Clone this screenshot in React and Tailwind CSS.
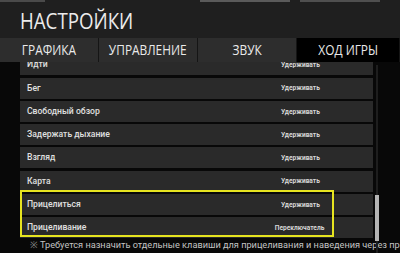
import React from "react";

const rows = [
  ["Идти", "Удерживать"],
  ["Бег", "Удерживать"],
  ["Свободный обзор", "Удерживать"],
  ["Задержать дыхание", "Удерживать"],
  ["Взгляд", "Удерживать"],
  ["Карта", "Удерживать"],
  ["Прицелиться", "Удерживать"],
  ["Прицеливание", "Переключатель"],
];

const tabs = ["ГРАФИКА", "УПРАВЛЕНИЕ", "ЗВУК", "ХОД ИГРЫ"];

export default function App() {
  return (
    <div className="relative w-[400px] h-[253px] overflow-hidden bg-[#080808] flex flex-col font-['Roboto',sans-serif]">
      {/* header */}
      <div className="h-[38px] bg-[#1f1f1f] flex flex-col">
        <div className="h-[2px] flex">
          <div className="w-[45px] bg-[#4a4a4a]" />
          <div className="w-[155px]" />
          <div className="w-[90px] bg-[#5a5a5a]" />
          <div className="w-[10px]" />
          <div className="w-[80px] bg-[#4f4f4f]" />
        </div>
        <div className="flex-1 flex items-center pl-[20px]">
          <span className="inline-block origin-left scale-x-[0.85] text-[22px] leading-none text-[#ececec] font-['Open_Sans',sans-serif]">
            НАСТРОЙКИ
          </span>
        </div>
      </div>
      {/* tabs */}
      <div className="h-[24px] flex bg-[#151515] gap-[1px]">
        {tabs.map((t, i) => (
          <div
            key={t}
            className={
              i === 3
                ? "w-[102px] bg-black flex items-center justify-center"
                : "w-[98px] bg-[#2d2d2d] flex items-center justify-center"
            }
          >
            <span className="inline-block scale-x-[0.85] text-[14px] leading-none text-[#eaeaea] font-['Open_Sans',sans-serif]">
              {t}
            </span>
          </div>
        ))}
      </div>
      {/* content */}
      <div className="flex-1 flex">
        <div className="w-[20px]" />
        <div className="w-[353px] flex flex-col">
          <div className="h-[176.3px] overflow-hidden">
            <div className="flex flex-col gap-[2.3px] mt-[-7.8px]">
              {rows.map(([l, v]) => (
                <div key={l} className="h-[21px] shrink-0 bg-[#2a2a2a] flex items-center">
                  <div className="flex-1 pl-[7px] text-[8.6px] font-medium text-[#e0e0e0]">{l}</div>
                  <div className="w-[146px] flex justify-center">
                    <span className="inline-block scale-x-[0.87] text-[7.6px] font-bold text-[#d6d6d6]">{v}</span>
                  </div>
                </div>
              ))}
            </div>
          </div>
          <div className="pl-[10px] h-[13px] leading-[13px] whitespace-nowrap text-[9.2px] text-[#c4c4c4]">
            <span className="text-[#8a8a8a] mr-[2px]">※</span>Требуется назначить отдельные клавиши для прицеливания и наведения через прицел
          </div>
        </div>
        <div className="w-[2px]" />
        <div className="relative w-[4px]">
          <div className="absolute left-[1px] top-[3px] bottom-0 w-[2px] bg-[#1e1e1e]" />
          <div className="absolute left-0 top-[133px] h-[46px] w-[4px] bg-[#b4b4b4]" />
        </div>
      </div>
      {/* highlight */}
      <div className="absolute left-[20px] top-[190px] w-[314px] h-[47px] border-2 border-[#e6e420]" />
    </div>
  );
}
